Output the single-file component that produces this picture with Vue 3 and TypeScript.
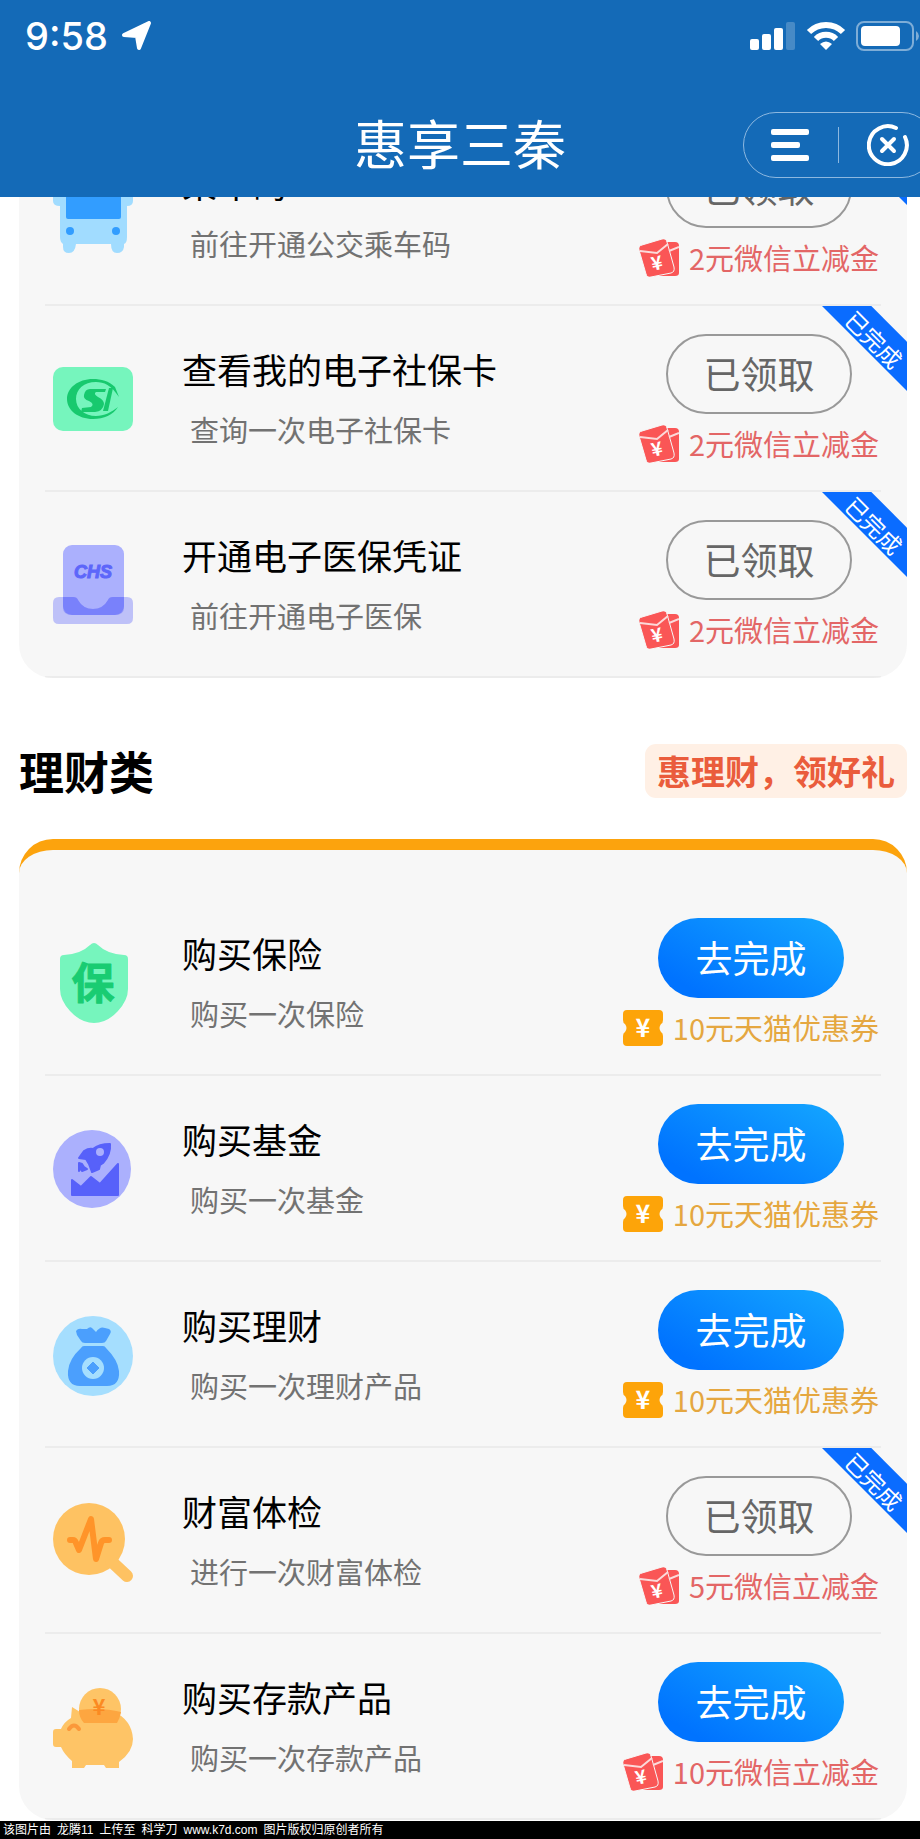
<script setup lang="ts">
type IconName = 'bus' | 'social' | 'medical' | 'shield' | 'fund' | 'bag' | 'health' | 'piggy'

interface Task {
  id: string
  icon: IconName
  title: string
  desc: string
  done: boolean
  reward: string
  rewardKind: 'packet' | 'voucher'
}

interface Group {
  id: string
  name?: string
  slogan?: string
  tasks: Task[]
}

const groups: Group[] = [
  {
    id: 'life',
    tasks: [
      { id: 'bus', icon: 'bus', title: '乘车码', desc: '前往开通公交乘车码', done: true, reward: '2元微信立减金', rewardKind: 'packet' },
      { id: 'social', icon: 'social', title: '查看我的电子社保卡', desc: '查询一次电子社保卡', done: true, reward: '2元微信立减金', rewardKind: 'packet' },
      { id: 'medical', icon: 'medical', title: '开通电子医保凭证', desc: '前往开通电子医保', done: true, reward: '2元微信立减金', rewardKind: 'packet' },
    ],
  },
  {
    id: 'finance',
    name: '理财类',
    slogan: '惠理财，领好礼',
    tasks: [
      { id: 'insurance', icon: 'shield', title: '购买保险', desc: '购买一次保险', done: false, reward: '10元天猫优惠券', rewardKind: 'voucher' },
      { id: 'fund', icon: 'fund', title: '购买基金', desc: '购买一次基金', done: false, reward: '10元天猫优惠券', rewardKind: 'voucher' },
      { id: 'wealth', icon: 'bag', title: '购买理财', desc: '购买一次理财产品', done: false, reward: '10元天猫优惠券', rewardKind: 'voucher' },
      { id: 'checkup', icon: 'health', title: '财富体检', desc: '进行一次财富体检', done: true, reward: '5元微信立减金', rewardKind: 'packet' },
      { id: 'deposit', icon: 'piggy', title: '购买存款产品', desc: '购买一次存款产品', done: false, reward: '10元微信立减金', rewardKind: 'packet' },
    ],
  },
]

const credits: string[] = ['该图片由', '龙腾11', '上传至', '科学刀', 'www.k7d.com', '图片版权归原创者所有']
</script>

<template>
  <div class="page">
    <header class="header">
      <div class="status">
        <span class="time">9:58</span>
        <svg class="arrow" width="30" height="30" viewBox="0 0 30 30" aria-hidden="true">
          <path d="M27 2 L17 27 L15 15 L2 14 Z" fill="#fff" stroke="#fff" stroke-width="4" stroke-linejoin="round" />
        </svg>
        <svg class="signal" width="46" height="30" viewBox="0 0 46 30" aria-hidden="true">
          <g fill="#fff">
            <rect x="0" y="18" width="9" height="11" rx="2" />
            <rect x="12" y="13" width="9" height="16" rx="2" />
            <rect x="24" y="7" width="9" height="22" rx="2" />
            <rect x="36" y="1" width="9" height="28" rx="2" opacity=".22" />
          </g>
        </svg>
        <svg class="wifi" width="40" height="30" viewBox="0 0 40 30" aria-hidden="true">
          <g fill="none" stroke="#fff" stroke-width="6">
            <path d="M3 11 A24 24 0 0 1 37 11" />
            <path d="M10 18 A14 14 0 0 1 30 18" />
          </g>
          <path d="M14 23 Q20 18 26 23 L20 29 Z" fill="#fff" />
        </svg>
        <svg class="battery" width="64" height="30" viewBox="0 0 64 30" aria-hidden="true">
          <rect x="1" y="1" width="56" height="28" rx="7" fill="none" stroke="#fff" stroke-opacity=".45" stroke-width="2" />
          <rect x="5" y="5" width="39" height="20" rx="4" fill="#fff" />
          <path d="M60 10 Q63 12 63 15 Q63 18 60 20 Z" fill="#fff" opacity=".45" />
        </svg>
      </div>
      <div class="navbar">
        <h1 class="app-title">惠享三秦</h1>
        <div class="capsule">
          <button class="cap-btn" type="button" aria-label="菜单">
            <svg width="38" height="32" viewBox="0 0 38 32">
              <g fill="#fff">
                <rect x="0" y="0" width="38" height="6" rx="2" />
                <rect x="0" y="13" width="29" height="6" rx="2" />
                <rect x="0" y="26" width="38" height="6" rx="2" />
              </g>
            </svg>
          </button>
          <span class="cap-line"></span>
          <button class="cap-btn" type="button" aria-label="关闭">
            <svg width="42" height="42" viewBox="0 0 42 42" fill="none" stroke="#fff" stroke-width="4" stroke-linecap="round">
              <path d="M29 4 A19 19 0 1 0 38 13" />
              <path d="M15 15 L27 27 M27 15 L15 27" />
            </svg>
          </button>
        </div>
      </div>
    </header>

    <main class="list">
      <section v-for="group in groups" :key="group.id" class="group">
        <div v-if="group.name" class="group-head">
          <h2 class="group-name">{{ group.name }}</h2>
          <span class="slogan">{{ group.slogan }}</span>
        </div>
        <ul class="card" :class="{ topped: group.name }">
          <li v-for="task in group.tasks" :key="task.id" class="row">
            <svg class="icon" width="80" height="82" viewBox="0 0 80 82" aria-hidden="true">
              <g v-if="task.icon === 'bus'">
                <path d="M0 12 H7 V8 Q7 0 15 0 H66 Q74 0 74 8 V12 H80 V28 Q80 33 74 33 V64 Q74 70 71 71 V74 Q70 80 64 80 Q58 80 58 71 H23 Q22 80 16 80 Q10 80 10 74 V71 Q7 69 7 64 V33 Q0 33 0 28 Z" fill="#a1dcff" />
                <rect x="13" y="10" width="55" height="36" rx="2" fill="#329dff" />
                <circle cx="17" cy="58" r="4" fill="#329dff" />
                <circle cx="63" cy="58" r="4" fill="#329dff" />
              </g>
              <g v-else-if="task.icon === 'social'">
                <rect x="0" y="8" width="80" height="64" rx="10" fill="#76f5bd" />
                <path d="M62 28 C56 22 48 20 40 20 C25 20 14 29 14 40 C14 51 25 60 40 60 C51 60 60 56 65 48 C59 53 51 57 43 57 C32 57 23 50 23 40 C23 30 31 23 43 23 C51 23 58 26 66 38 Z" fill="#17c96e" />
                <path d="M53 30 H37 Q32 30 31 36 Q30 40 36 42 Q42 45 38 48 L29 49 L28 53 H42 Q50 52 51 45 Q51 41 45 38 Q40 35 43 33 L52 33 Z" fill="#17c96e" />
                <path d="M56 29 H60 L55 52 H50 Z" fill="#17c96e" />
              </g>
              <g v-else-if="task.icon === 'medical'">
                <rect x="10" y="0" width="61" height="70" rx="9" fill="#abb0fd" />
                <path d="M6 52 H20 Q24 52 25 55 Q30 64 40 64 Q50 64 55 55 Q56 52 60 52 H74 Q80 52 80 58 V73 Q80 79 74 79 H6 Q0 79 0 73 V58 Q0 52 6 52 Z" fill="#6068fb" fill-opacity=".38" />
                <path d="M10 52 H20 Q24 52 25 55 Q30 64 40 64 Q50 64 55 55 Q56 52 60 52 H71 V62 Q71 70 62 70 H19 Q10 70 10 62 Z" fill="#6068fb" fill-opacity=".45" />
                <text x="40" y="33" class="chs">CHS</text>
              </g>
              <g v-else-if="task.icon === 'shield'">
                <path d="M37 2 Q41 -2 45 2 Q54 11 71 12 Q75 12 75 16 V46 Q75 57 65 68 Q54 80 41 80 Q28 80 17 68 Q7 57 7 46 V16 Q7 12 11 12 Q28 11 37 2 Z" fill="#76f5bd" />
                <text x="40" y="56" class="bao">保</text>
              </g>
              <g v-else-if="task.icon === 'fund'">
                <circle cx="39" cy="40" r="39" fill="#abb0fd" />
                <g fill="#5761fa" stroke="#5761fa" stroke-width="2" stroke-linejoin="round">
                  <path d="M19 51 L28 58 L38 48 L47 55 L65 35 V66 H19 Z" />
                  <path d="M57 15 Q58 25 50 34 L47 36 L46 40 L39 43 L36 35 L33 30 L26 29 L31 22 Q36 19 40 20 Q46 15 57 15 Z" />
                  <path d="M26 34 L29 35 L31 38 L34 40 L29 42 L27 39 L26 42 Z" />
                </g>
                <circle cx="47" cy="23" r="4" fill="#abb0fd" />
              </g>
              <g v-else-if="task.icon === 'bag'">
                <circle cx="40" cy="41" r="40" fill="#a5defe" />
                <g fill="#4b9ffd">
                  <path d="M23 16 Q25 13 29 14 L34 14 Q37 11 39 13 L43 17 Q47 11 52 13 L56 14 Q59 16 57 19 L53 26 Q52 28 49 28 H32 Q29 28 28 26 L24 20 Z" />
                  <path d="M31 31 H50 Q52 31 53 33 Q65 45 66 56 Q67 71 54 71 H27 Q14 71 15 56 Q16 44 28 33 Q29 31 31 31 Z" />
                </g>
                <circle cx="40" cy="53" r="11" fill="#a5defe" />
                <path d="M40 47 L46 53 L40 59 L34 53 Z" fill="#4b9ffd" stroke="#4b9ffd" stroke-width="1" stroke-linejoin="round" />
              </g>
              <g v-else-if="task.icon === 'health'">
                <circle cx="36" cy="38" r="36" fill="#fec262" />
                <path d="M58 60 L74 75" stroke="#fec262" stroke-width="12" stroke-linecap="round" />
                <path d="M17 39 H20 Q22 39 23 42 L26 49 L38 18 L43 58 L48 42 Q49 39 52 39 H56" fill="none" stroke="#ff9429" stroke-width="6" stroke-linecap="round" stroke-linejoin="round" />
              </g>
              <g v-else>
                <path d="M19 20 L27 25 Q34 23 44 24 H60 Q79 33 80 52 Q80 65 66 75 V81 H53 L51 78 H33 L31 81 H19 V74 Q11 67 8 60 H3 Q0 60 0 57 V45 Q0 42 3 42 H8 Q11 35 18 31 Z" fill="#fec466" />
                <circle cx="47" cy="22" r="21" fill="#fec466" />
                <path d="M26 23 Q49 20 68 25 Q67 31 64 36 H31 Q26 31 26 23 Z" fill="#fda640" />
                <path d="M16 42 Q21 35 26 42" fill="none" stroke="#fb983a" stroke-width="4" stroke-linecap="round" />
                <text x="46" y="28" class="pig-yen">¥</text>
              </g>
            </svg>

            <div class="info">
              <h3 class="title">{{ task.title }}</h3>
              <p class="desc">{{ task.desc }}</p>
            </div>

            <div class="action">
              <button type="button" class="btn" :class="task.done ? 'claimed' : 'todo'">{{ task.done ? '已领取' : '去完成' }}</button>
              <div class="reward" :class="task.rewardKind">
                <svg v-if="task.rewardKind === 'packet'" width="40" height="38" viewBox="0 0 40 38" aria-hidden="true">
                  <path d="M28 3 L36 3 Q40 3 40 7 V34 Q40 37 36 37 L20 37 Z" fill="#fa5656" />
                  <path d="M0 11 Q-1 7 3 6 L23 0 Q27 -1 28 3 L35 28 Q36 33 32 34 L12 38 Q8 39 7 35 Z" fill="#fa5656" stroke="#f7f7f7" stroke-width="1" />
                  <path d="M1 12 L18 14 L29 5 M30 12 L40 8" fill="none" stroke="#fbdada" stroke-width="2" />
                  <text x="18" y="31" class="yen" transform="rotate(-12 18 25)">¥</text>
                </svg>
                <svg v-else width="40" height="36" viewBox="0 0 40 36" aria-hidden="true">
                  <path d="M4 0 H36 Q40 0 40 4 V10 Q40 13 38 14 Q35 18 38 22 Q40 23 40 26 V32 Q40 36 36 36 H4 Q0 36 0 32 V26 Q0 23 2 22 Q5 18 2 14 Q0 13 0 10 V4 Q0 0 4 0 Z" fill="#fda409" />
                  <text x="20" y="27" class="yen big">¥</text>
                </svg>
                <span>{{ task.reward }}</span>
              </div>
            </div>

            <div v-if="task.done" class="ribbon"><span class="ribbon-text">已完成</span></div>
          </li>
        </ul>
      </section>
    </main>

    <footer class="credits">
      <span v-for="part in credits" :key="part">{{ part }}</span>
    </footer>
  </div>
</template>

<style>
body {
  background: #fff;
}
</style>

<style scoped>
.page {
  font-family: "Noto Sans CJK SC", "Noto Sans", sans-serif;
  color: #000;
  background: #fff;
  overflow: hidden;
}
h1, h2, h3, p, ul {
  margin: 0;
  padding: 0;
}
svg {
  display: block;
  flex: none;
}
button {
  font-family: inherit;
  margin: 0;
  padding: 0;
  cursor: pointer;
}

.header {
  position: relative;
  z-index: 2;
  height: 197px;
  overflow: hidden;
  background: #146ab7;
  color: #fff;
}
.status {
  display: flex;
  align-items: center;
  height: 72px;
  padding-left: 25px;
}
.time {
  font: 500 38px/48px Inter, sans-serif;
}
.arrow {
  margin-left: 14px;
}
.signal {
  margin-left: auto;
}
.wifi {
  margin: 0 10px;
}
.navbar {
  display: grid;
  grid-template-columns: 1fr auto 1fr;
  align-items: center;
  height: 66px;
  margin-top: 40px;
}
.app-title {
  grid-column: 2;
  padding-bottom: 6px;
  font-size: 53px;
  line-height: 60px;
  font-weight: 400;
}
.capsule {
  justify-self: end;
  display: flex;
  align-items: center;
  justify-content: space-between;
  box-sizing: border-box;
  width: 192px;
  height: 66px;
  margin-right: -15px;
  padding: 0 25px 0 27px;
  border: 1px solid #8db8e0;
  border-radius: 33px;
}
.cap-btn {
  border: 0;
  background: none;
}
.cap-line {
  width: 1px;
  height: 36px;
  background: #8db8e0;
}

.list {
  margin-top: -77px;
  padding: 0 13px 0 19px;
}
.group-head {
  display: flex;
  align-items: center;
  justify-content: space-between;
  margin: 66px 0 41px;
}
.group-name {
  font-size: 45px;
  line-height: 54px;
  font-weight: 700;
}
.slogan {
  padding: 0 12px;
  border-radius: 11px;
  background: #fff0e5;
  color: #ea5c3c;
  font-size: 34px;
  line-height: 54px;
  font-weight: 700;
}
.card {
  list-style: none;
  padding: 0 26px;
  border-radius: 34px;
  background: #f7f7f7;
  overflow: hidden;
}
.card.topped {
  padding-top: 40px;
  border-top: 11px solid #fca30d;
}
.row {
  position: relative;
  display: flex;
  align-items: flex-start;
  box-sizing: border-box;
  height: 186px;
  border-bottom: 2px solid #ececec;
}
.icon {
  margin: 53px 0 0 8px;
}
.info {
  flex: 1;
  min-width: 0;
  margin: 39px 0 0 49px;
}
.title {
  font-size: 35px;
  line-height: 48px;
  font-weight: 400;
}
.desc {
  margin: 16px 0 0 8px;
  font-size: 29px;
  line-height: 40px;
  color: #727272;
}
.action {
  display: flex;
  flex-direction: column;
  align-items: center;
  margin: 28px 2px 0 0;
}
.btn {
  box-sizing: border-box;
  width: 186px;
  height: 80px;
  padding-bottom: 2px;
  border-radius: 40px;
  font-size: 37px;
  line-height: 74px;
}
.claimed {
  border: 2px solid #999;
  background: transparent;
  color: #666;
}
.todo {
  border: 0;
  background: linear-gradient(30deg, #0073ff 15%, #12a1ff 90%);
  color: #fff;
}
.reward {
  display: flex;
  align-items: center;
  gap: 10px;
  height: 40px;
  margin-top: 10px;
  font-size: 29px;
  line-height: 38px;
}
.reward span {
  padding-bottom: 2px;
}
.packet {
  color: #e36666;
}
.voucher {
  color: #e5a740;
}
.yen {
  fill: #fff;
  font: 700 19px "Noto Sans CJK SC", sans-serif;
  text-anchor: middle;
}
.yen.big {
  font-size: 25px;
}
.pig-yen {
  fill: #fb8a22;
  font: 700 22px "Noto Sans CJK SC", sans-serif;
  text-anchor: middle;
}
.chs {
  fill: #5d66fa;
  stroke: #5d66fa;
  stroke-width: 1px;
  font: italic 700 18px "Liberation Sans", sans-serif;
  text-anchor: middle;
}
.bao {
  fill: #19cc72;
  stroke: #19cc72;
  stroke-width: 1px;
  stroke-linejoin: round;
  font: 700 43px "Noto Sans CJK SC", sans-serif;
  text-anchor: middle;
}
.ribbon {
  position: absolute;
  top: 0;
  right: -26px;
  display: flex;
  align-items: center;
  justify-content: center;
  width: 85px;
  height: 85px;
  background: #0a6cff;
  clip-path: polygon(0 0, 58% 0, 100% 42%, 100% 100%);
}
.ribbon-text {
  flex: none;
  padding-bottom: 28px;
  color: #fff;
  font-size: 23px;
  line-height: 24px;
  transform: rotate(45deg);
}
.credits {
  display: flex;
  align-items: center;
  gap: 6px;
  height: 18px;
  margin-top: 1px;
  padding-left: 3px;
  background: #000;
  color: #fff;
  font: 12px/18px "Liberation Sans", "Noto Sans CJK SC", sans-serif;
  white-space: nowrap;
}
</style>
